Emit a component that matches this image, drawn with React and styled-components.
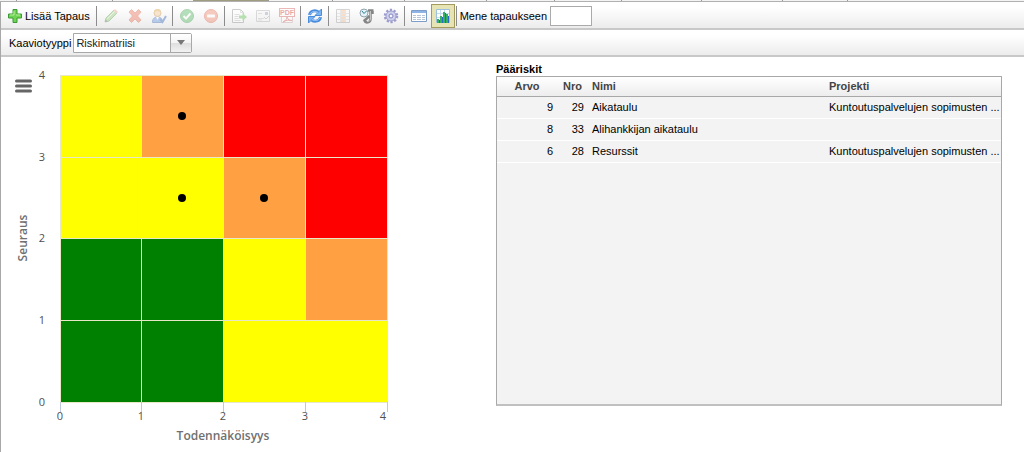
import React from 'react';
import styled, { createGlobalStyle } from 'styled-components';

const tabs = [
  { id: 't1', size: 17 },
  { id: 't2', size: 96 },
  { id: 't3', size: 81 },
  { id: 't4', size: 75, active: true },
  { id: 't5', size: 64 },
  { id: 't6', size: 72 },
  { id: 't7', size: 82 },
  { id: 't8', size: 68 },
  { id: 't9', size: 67 },
  { id: 't10', size: 80 },
  { id: 't11', size: 81 },
  { id: 't12', size: 65 },
];

const risks = [
  {
    value: 9,
    number: 29,
    name: 'Aikataulu',
    project: 'Kuntoutuspalvelujen sopimusten ...',
  },
  { value: 8, number: 33, name: 'Alihankkijan aikataulu', project: '' },
  {
    value: 6,
    number: 28,
    name: 'Resurssit',
    project: 'Kuntoutuspalvelujen sopimusten ...',
  },
];

const colors = { Y: '#ffff00', O: '#ffa042', R: '#ff0000', G: '#008000' };
const matrix = ['YORR', 'YYOR', 'GGYO', 'GGYY'];
const points = [
  [1.5, 3.5],
  [1.5, 2.5],
  [2.5, 2.5],
];
const ticks = [0, 1, 2, 3, 4];

// plot area inside the chart svg
const LEFT = 59;
const TOP = 18;
const SIZE = 327;
const px = (v) => LEFT + Math.floor((v * SIZE) / 4);
const py = (v) => TOP + SIZE - Math.round((v * SIZE) / 4);

const PlusIcon = () => (
  <Icon viewBox="0 0 16 16">
    <path
      d="M6 1.5h4V6h4.5v4H10v4.5H6V10H1.5V6H6z"
      fill="#6fd451"
      stroke="#3a9a35"
      strokeLinejoin="round"
    />
    <path d="M7 3v4H3M9 7h4" fill="none" stroke="#b9f09c" />
  </Icon>
);

const PencilIcon = () => (
  <Icon viewBox="0 0 16 16">
    <path d="M2 14l1-4 8-8 3 3-8 8z" fill="#8fcb74" stroke="#5c9c48" />
    <path d="M4 11l8-8" stroke="#d6f0c4" />
    <path d="M10.5 2.5l3 3L15 4l-3-3z" fill="#e79a8c" />
    <path d="M2 14l.6-2.6 2 2z" fill="#555" />
  </Icon>
);

const DeleteIcon = () => (
  <Icon viewBox="0 0 16 16">
    <path
      d="M2 4l2.5-2.5L8 5l3.5-3.5L14 4l-3.5 4 3.5 4-2.5 2.5L8 11l-3.5 3.5L2 12l3.5-4z"
      fill="#ee6a50"
      stroke="#dc5f48"
      strokeLinejoin="round"
    />
  </Icon>
);

const UserIcon = () => (
  <Icon viewBox="0 0 16 16">
    <path d="M1.5 14.5c0-4 2-5.5 5-5.5s5 1.5 5 5.5z" fill="#5f93dc" stroke="#3565b0" />
    <path d="M5 9l1.5 3L8 9z" fill="#fff" />
    <circle cx="6.5" cy="5" r="3.5" fill="#f3c58b" stroke="#c58b3a" />
    <path d="M3 4c0-4 7-4 7 0-2 0-3-1-4-1.5C5.5 3.5 4 4 3 4z" fill="#d9a033" />
    <path d="M9 11l2.5 3L15 8" fill="none" stroke="#2b62b8" strokeWidth="2" />
  </Icon>
);

const AcceptIcon = () => (
  <Icon viewBox="0 0 16 16">
    <circle cx="8" cy="8" r="6.5" fill="#4cb75a" stroke="#3a9a48" />
    <path d="M4.5 8l2.5 2.5 4.5-5" fill="none" stroke="#fff" strokeWidth="2" />
  </Icon>
);

const RejectIcon = () => (
  <Icon viewBox="0 0 16 16">
    <circle cx="8" cy="8" r="6.5" fill="#f08468" stroke="#dc5840" />
    <rect x="4" y="6.5" width="8" height="3" rx="1" fill="#fff" />
  </Icon>
);

const ExportIcon = () => (
  <Icon viewBox="0 0 16 16">
    <path d="M1.5 1.5h8l3 3v10h-11z" fill="#fff" stroke="#888" />
    <path d="M9.5 1.5v3h3M3.5 6.5h5M3.5 8.5h4M3.5 10.5h4M3.5 12.5h6" fill="none" stroke="#bbb" />
    <path d="M8 7.5h3.5V5L16 9l-4.5 4v-2.5H8z" fill="#5ebd4c" />
  </Icon>
);

const MailIcon = () => (
  <Icon viewBox="0 0 16 16">
    <path d="M1.5 2.5h13v11h-13z" fill="#f4f4f4" stroke="#aaa" />
    <path d="M3 10.5h6M3 12h4M3 5.5h4" stroke="#bbb" />
    <path d="M10 4h3v3h-3z" fill="#8a9bb5" />
    <path d="M9 9l2 2 3-3" fill="none" stroke="#a0a0a0" />
  </Icon>
);

const PdfIcon = () => (
  <Icon viewBox="0 0 16 16">
    <path d="M2.5 8.5h11v6h-11z" fill="#fff" stroke="#c9a0a0" />
    <path d="M4 14c3-1 4-4 4-5 1 3 3 4 5 3.5-3-1-7 0-9 1.5z" fill="none" stroke="#d24f4f" />
    <rect x="0.5" y="0.5" width="15" height="8" fill="#fff" stroke="#d65252" />
    <text x="8" y="7" textAnchor="middle" fill="#cf3030" fontSize="7" fontWeight="bold">
      PDF
    </text>
  </Icon>
);

const RefreshIcon = () => (
  <Icon viewBox="0 0 16 16">
    <path d="M2.5 7C3 3 8 1.5 11.5 4" fill="none" stroke="#4a8cdc" strokeWidth="3" />
    <path d="M14.5 1v6.5H8z" fill="#7ab4f2" stroke="#4a8cdc" />
    <path d="M2.8 6.5C4 3.5 8 2.5 11 4.5" fill="none" stroke="#a5cdf8" />
    <path d="M13.5 9c-.5 4-5.5 5.5-9 3" fill="none" stroke="#4a8cdc" strokeWidth="3" />
    <path d="M1.5 15V8.5H8z" fill="#7ab4f2" stroke="#4a8cdc" />
    <path d="M13.2 9.5c-1.2 3-5.2 4-8.2 2" fill="none" stroke="#a5cdf8" />
  </Icon>
);

const ColumnsIcon = () => (
  <Icon viewBox="0 0 16 16">
    <path d="M1.5 1.5h13v13h-13z" fill="#f8f8f8" stroke="#999" />
    <path d="M5.5 2h5v12h-5z" fill="#f5b98a" />
    <path d="M5.5 2v12M10.5 2v12M2 5.5h12M2 8.5h12M2 11.5h12" stroke="#ccc" />
  </Icon>
);

const ClockIcon = () => (
  <Icon viewBox="0 0 16 16">
    <path
      d="M9 2.5h5.5M11.5 3v8c0 4-5 4.5-6 1.5l5-4.5M13.5 3v3"
      fill="none"
      stroke="#858585"
      strokeWidth="2.5"
    />
    <path d="M11.5 3v8c0 2-2 3-3.5 2.5" fill="none" stroke="#c4c4c4" />
    <circle cx="5" cy="5" r="4" fill="#e5f1f6" stroke="#8fa3ae" />
    <path d="M3 3l2 2.5L7.5 3" fill="none" stroke="#2d7f94" />
  </Icon>
);

const GearIcon = () => (
  <Icon viewBox="0 0 16 16">
    <circle cx="8" cy="8" r="6" fill="none" stroke="#9c9dcc" strokeWidth="2.5" strokeDasharray="2.2 1.57" />
    <circle cx="8" cy="8" r="5" fill="#cfd0ee" stroke="#9c9dcc" />
    <circle cx="8" cy="8" r="2" fill="#f7f7fb" stroke="#8384bb" />
  </Icon>
);

const ListIcon = () => (
  <Icon viewBox="0 0 16 16">
    <path d="M.5 2.5h15v11H.5z" fill="#fff" stroke="#7c9cc9" />
    <path d="M1 3h14v2H1z" fill="#8fb4e6" />
    <path
      d="M2 7.5h3M6 7.5h4M11 7.5h3M2 9.5h3M6 9.5h4M11 9.5h3M2 11.5h3M6 11.5h4M11 11.5h3"
      stroke="#b6c5d8"
    />
  </Icon>
);

const BarsIcon = () => (
  <Icon viewBox="0 0 16 16">
    <path d="M1.5 1.5h13v13h-13z" fill="#fff" stroke="#9cc0e0" />
    <path d="M2 5.5h12M2 9.5h12M5.5 2v12M9.5 2v12" stroke="#c4dcf0" />
    <path d="M2 11h2v4H2zM5 8h2v7H5zM8 4h2v11H8zM11 6h2v9h-2z" fill="#35b060" />
    <path d="M4 12h1v3H4zM7 9h1v6H7zM10 5h1v10h-1zM13 8h1v7h-1z" fill="#2a68c8" />
  </Icon>
);

const toolGroups = [
  [
    { label: 'Muokkaa', icon: PencilIcon, disabled: true },
    { label: 'Poista', icon: DeleteIcon, disabled: true },
    { label: 'Vastuuhenkilö', icon: UserIcon, disabled: true },
  ],
  [
    { label: 'Hyväksy', icon: AcceptIcon, disabled: true },
    { label: 'Hylkää', icon: RejectIcon, disabled: true },
  ],
  [
    { label: 'Vie', icon: ExportIcon, disabled: true },
    { label: 'Lähetä', icon: MailIcon, disabled: true },
    { label: 'PDF', icon: PdfIcon, disabled: true },
  ],
  [{ label: 'Päivitä', icon: RefreshIcon }],
  [
    { label: 'Sarakkeet', icon: ColumnsIcon, disabled: true },
    { label: 'Historia', icon: ClockIcon },
    { label: 'Asetukset', icon: GearIcon },
  ],
  [
    { label: 'Lista', icon: ListIcon },
    { label: 'Kaavio', icon: BarsIcon, active: true },
  ],
];

const Toolbar = () => (
  <Bar>
    <AddButton type="button">
      <PlusIcon />
      Lisää Tapaus
    </AddButton>
    <Separator />
    {toolGroups.map((group) => (
      <React.Fragment key={group[0].label}>
        {group.map(({ label, icon: ToolIcon, disabled, active }) => (
          <ToolButton
            key={label}
            type="button"
            aria-label={label}
            disabled={disabled}
            $active={active}
          >
            <ToolIcon />
          </ToolButton>
        ))}
        <Separator />
      </React.Fragment>
    ))}
    <GotoLabel htmlFor="goto">Mene tapaukseen</GotoLabel>
    <GotoInput id="goto" type="text" />
  </Bar>
);

const ChartTypeBar = () => (
  <ChartBar>
    <label htmlFor="chart-type">Kaaviotyyppi</label>
    <SelectWrapper>
      <Select id="chart-type" defaultValue="matrix">
        <option value="matrix">Riskimatriisi</option>
      </Select>
      <SelectArrow>
        <svg width="8" height="5" viewBox="0 0 8 5">
          <path d="M0 0h8L4 5z" fill="#777" />
        </svg>
      </SelectArrow>
    </SelectWrapper>
  </ChartBar>
);

const RiskMatrix = () => (
  <ChartArea>
    <Chart width="480" height="394" viewBox="0 0 480 394" role="img" aria-label="Riskimatriisi">
      {matrix.map((row, r) =>
        row.split('').map((cell, c) => (
          <rect
            key={`${4 - r}-${c}`}
            x={px(c)}
            y={py(4 - r)}
            width={px(c + 1) - px(c)}
            height={py(3 - r) - py(4 - r)}
            fill={colors[cell]}
          />
        ))
      )}
      {ticks.map((t) => (
        <g key={t} shapeRendering="crispEdges">
          <GridLine x1={px(t)} x2={px(t)} y1={TOP} y2={TOP + SIZE} />
          <GridLine x1={LEFT} x2={LEFT + SIZE} y1={py(t)} y2={py(t)} />
          <Tick x1={px(t)} x2={px(t)} y1={TOP + SIZE} y2={TOP + SIZE + 10} />
        </g>
      ))}
      {ticks.map((t) => (
        <g key={t}>
          <TickLabel x={t === 4 ? px(t) - 4 : px(t)} y={363}>
            {t}
          </TickLabel>
          <TickLabel x={41} y={py(t) + 4}>
            {t}
          </TickLabel>
        </g>
      ))}
      {points.map(([x, y]) => (
        <circle key={`${x}-${y}`} cx={px(x)} cy={py(y)} r="4" />
      ))}
      <AxisTitle x={222} y={383}>
        Todennäköisyys
      </AxisTitle>
      <AxisTitle transform="translate(26 181) rotate(-90)">Seuraus</AxisTitle>
    </Chart>
    <MenuButton type="button" aria-label="Valikko">
      <svg width="17" height="14" viewBox="0 0 17 14">
        <path
          d="M1.5 2h14M1.5 7h14M1.5 12h14"
          stroke="#666"
          strokeWidth="3"
          strokeLinecap="round"
        />
      </svg>
    </MenuButton>
  </ChartArea>
);

const TopRisks = () => (
  <Panel>
    <PanelTitle>Pääriskit</PanelTitle>
    <TableBox>
      <RiskTable>
        <colgroup>
          <col width="60" />
          <col width="31" />
          <col />
          <col width="176" />
        </colgroup>
        <thead>
          <tr>
            <HeaderCell $center>Arvo</HeaderCell>
            <HeaderCell $center>Nro</HeaderCell>
            <HeaderCell>Nimi</HeaderCell>
            <HeaderCell>Projekti</HeaderCell>
          </tr>
        </thead>
        <tbody>
          {risks.map((risk) => (
            <tr key={risk.number}>
              <Cell $right>{risk.value}</Cell>
              <Cell $right>{risk.number}</Cell>
              <Cell>{risk.name}</Cell>
              <Cell>{risk.project}</Cell>
            </tr>
          ))}
        </tbody>
      </RiskTable>
    </TableBox>
  </Panel>
);

const App = () => (
  <>
    <GlobalStyle />
    <TabStrip>
      {tabs.map((tab) => (
        <TabEdge key={tab.id} $size={tab.size} $active={tab.active} />
      ))}
    </TabStrip>
    <Page>
      <Toolbar />
      <ChartTypeBar />
      <Content>
        <RiskMatrix />
        <TopRisks />
      </Content>
    </Page>
  </>
);

export default App;

const GlobalStyle = createGlobalStyle`
  * {
    box-sizing: border-box;
  }

  body {
    margin: 0;
    background: #fff;
    color: #000;
    font-family: 'Liberation Sans', Arial, sans-serif;
    font-size: 11px;
  }

  button, input, select {
    font: inherit;
    color: inherit;
  }
`;

const TabStrip = styled.div`
  display: flex;
  height: 2px;
  overflow: hidden;
  background: #f4f4f4;
  border-bottom: 1px solid #b0b0b0;
`;

const TabEdge = styled.div`
  flex: 0 0 ${(props) => props.$size}px;
  border-right: 1px solid #999;
  background: ${(props) => (props.$active ? '#a09c80' : 'transparent')};
`;

const Page = styled.div`
  display: flex;
  flex-direction: column;
  min-height: calc(100vh - 2px);
  border-left: 1px solid #a8a8a8;
`;

const Bar = styled.div`
  display: flex;
  align-items: center;
  height: 28px;
  padding: 2px 4px 0 6px;
  background: linear-gradient(#fff 20%, #ececec);
  border-bottom: 2px solid #c8c8c8;
  white-space: nowrap;
`;

const ChartBar = styled(Bar)`
  height: 27px;
  padding: 0 8px;
  gap: 2px;
`;

const Icon = styled.svg`
  display: block;
  flex: none;
  width: 16px;
  height: 16px;
`;

const AddButton = styled.button`
  display: flex;
  align-items: center;
  gap: 2px;
  height: 24px;
  padding: 0;
  margin-right: 5px;
  border: 0;
  background: none;
`;

const ToolButton = styled.button`
  display: flex;
  align-items: center;
  justify-content: center;
  flex: none;
  width: 24px;
  height: 24px;
  padding: 0;
  border: 1px solid ${(props) => (props.$active ? '#a39a5c' : 'transparent')};
  background: ${(props) => (props.$active ? '#e6e4b4' : 'none')};

  svg {
    opacity: ${(props) => (props.disabled ? 0.4 : 1)};
  }
`;

const Separator = styled.div`
  flex: none;
  width: 4px;
  height: 20px;
  background: linear-gradient(#8c8c8c, #8c8c8c) 1px 0 / 1px 100% no-repeat;
`;

const GotoLabel = styled.label`
  margin-left: 1px;
`;

const GotoInput = styled.input`
  width: 42px;
  height: 20px;
  margin-left: 3px;
  padding: 0 2px;
  border: 1px solid #aaa;
  background: #fff;
`;

const SelectWrapper = styled.div`
  display: grid;
  width: 119px;
  height: 20px;
`;

const Select = styled.select`
  grid-area: 1 / 1;
  appearance: none;
  height: 20px;
  padding: 0 22px 0 2px;
  border: 1px solid #a8a8a8;
  border-radius: 0 2px 2px 0;
  background: #fff;
  color: #222;
`;

const SelectArrow = styled.span`
  grid-area: 1 / 1;
  justify-self: end;
  display: flex;
  align-items: center;
  justify-content: center;
  width: 21px;
  margin: 1px 1px 1px 0;
  border-left: 1px solid #a8a8a8;
  background: linear-gradient(#fff, #f4f4f4 50%, #dedede 50%, #f2f2f2);
  pointer-events: none;
`;

const Content = styled.main`
  display: flex;
  flex: 1;
`;

const ChartArea = styled.section`
  display: grid;
  flex: none;
`;

const Chart = styled.svg`
  grid-area: 1 / 1;
  display: block;
  font-family: 'Open Sans', 'Noto Sans', sans-serif;
`;

const GridLine = styled.line`
  stroke: #e8e8c8;
`;

const Tick = styled.line`
  stroke: #c0c8e0;
`;

const TickLabel = styled.text`
  fill: #505050;
  font-size: 11px;
  font-weight: 500;
  text-anchor: middle;
`;

const AxisTitle = styled.text`
  fill: #707070;
  font-size: 12px;
  font-weight: 600;
  text-anchor: middle;
`;

const MenuButton = styled.button`
  grid-area: 1 / 1;
  place-self: start;
  margin: 22px 0 0 14px;
  padding: 0;
  border: 0;
  background: none;
  line-height: 0;
`;

const Panel = styled.section`
  flex: 1;
  min-width: 0;
  padding: 6px 22px 0 15px;
`;

const PanelTitle = styled.h2`
  margin: 0;
  font-size: 11px;
  line-height: 13px;
`;

const TableBox = styled.div`
  min-height: 330px;
  border: 1px solid #a8a8a8;
  border-bottom: 2px solid #c0c0c0;
  background: #f3f3f3;
`;

const RiskTable = styled.table`
  width: 100%;
  table-layout: fixed;
  border-collapse: collapse;
`;

const HeaderCell = styled.th`
  height: 19px;
  padding: 0 4px;
  border-bottom: 1px solid #a8a8a8;
  background: linear-gradient(#fff, #ededed);
  color: #444;
  text-align: ${(props) => (props.$center ? 'center' : 'left')};
`;

const Cell = styled.td`
  height: 22px;
  padding: 0 4px;
  border-bottom: 1px solid #fff;
  overflow: hidden;
  text-align: ${(props) => (props.$right ? 'right' : 'left')};
  text-overflow: ellipsis;
  white-space: nowrap;

  &:last-child {
    padding-right: 0;
  }
`;
